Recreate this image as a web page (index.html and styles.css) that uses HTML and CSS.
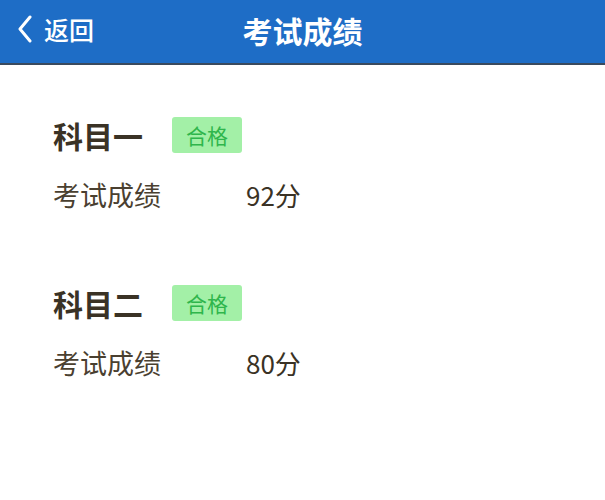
FILE: index.html
```html
<!DOCTYPE html>
<html lang="zh">
<head>
<meta charset="utf-8">
<link rel="stylesheet" href="styles.css">
</head>
<body>
<header class="nav">
  <div class="back">
    <svg class="chev" width="16" height="28" viewBox="0 0 16 28"><path d="M13 2 L3 14 L13 26" fill="none" stroke="#fff" stroke-width="3" stroke-linecap="round" stroke-linejoin="round"/></svg>
    <span class="back-text">返回</span>
  </div>
  <h1 class="title">考试成绩</h1>
</header>
<main class="list">
  <section class="subject">
    <div class="head">
      <span class="name">科目一</span>
      <span class="badge">合格</span>
    </div>
    <div class="row">
      <span class="label">考试成绩</span>
      <span class="score">92分</span>
    </div>
  </section>
  <section class="subject">
    <div class="head">
      <span class="name">科目二</span>
      <span class="badge">合格</span>
    </div>
    <div class="row">
      <span class="label">考试成绩</span>
      <span class="score">80分</span>
    </div>
  </section>
</main>
</body>
</html>
```
FILE: styles.css
```css
* { box-sizing: border-box; margin: 0; padding: 0; }
body {
  background: #fff;
  font-family: "Noto Sans CJK SC", "Noto Sans", sans-serif;
  width: 605px;
  height: 500px;
  overflow: hidden;
}
.nav {
  position: relative;
  height: 65px;
  background: #1e6dc6;
  border-bottom: 2px solid #3a4a5e;
  display: flex;
  align-items: center;
  justify-content: center;
}
.back {
  position: absolute;
  left: 17px;
  top: 13px;
  display: flex;
  align-items: center;
  gap: 11px;
}
.chev { display: block; }
.back-text {
  color: #fff;
  font-size: 25px;
  line-height: 32px;
  font-weight: 500;
}
.title {
  color: #fff;
  font-size: 30px;
  font-weight: 700;
  line-height: 36px;
  margin-top: -4px;
}
.list {
  padding: 52px 0 0 53px;
  display: flex;
  flex-direction: column;
  gap: 74px;
}
.subject { display: flex; flex-direction: column; gap: 26px; }
.head { display: flex; align-items: center; gap: 29px; }
.name {
  font-size: 30px;
  font-weight: 700;
  color: #3a3225;
  line-height: 36px;
}
.badge {
  background: #a3f0a7;
  color: #2fb64c;
  font-size: 21px;
  line-height: 36px;
  height: 36px;
  padding: 0 14px;
  border-radius: 3px;
}
.row { display: flex; align-items: center; }
.label {
  width: 193px;
  font-size: 27px;
  color: #4a4030;
  line-height: 32px;
}
.score {
  font-size: 26px;
  color: #3a3225;
  line-height: 32px;
}
```
